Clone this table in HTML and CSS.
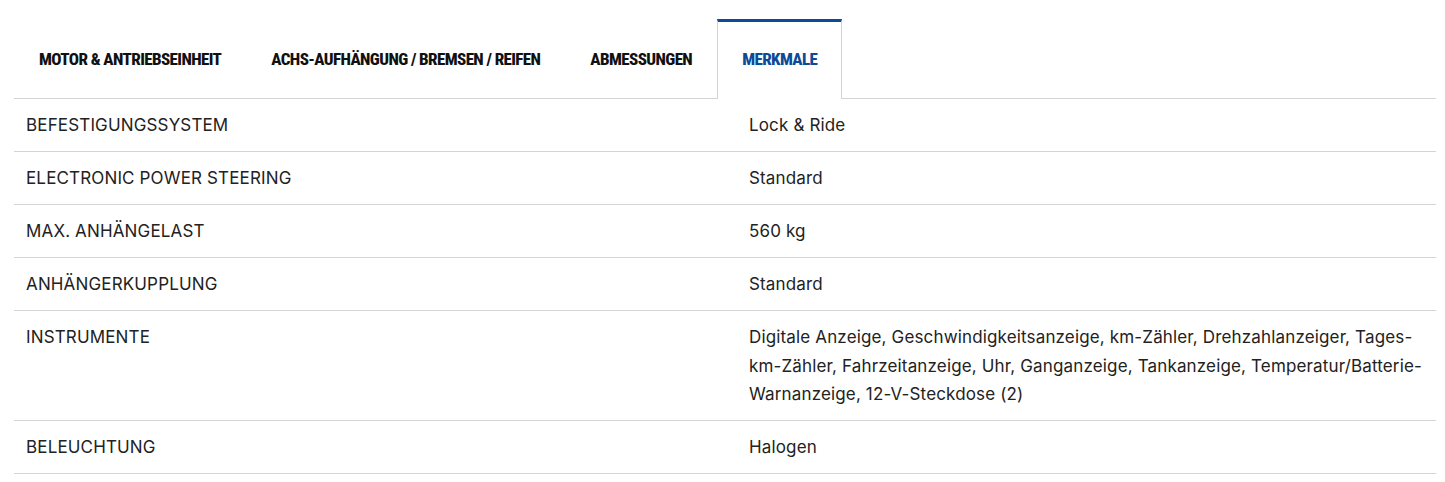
FILE: index.html
```html
<!DOCTYPE html>
<html lang="de">
<head>
<meta charset="utf-8">
<title>Technische Daten</title>
<link rel="stylesheet" href="styles.css">
</head>
<body>
<div class="specs">
  <nav class="tabs">
    <div class="tab">MOTOR &amp; ANTRIEBSEINHEIT</div>
    <div class="tab">ACHS-AUFHÄNGUNG / BREMSEN / REIFEN</div>
    <div class="tab">ABMESSUNGEN</div>
    <div class="tab active">MERKMALE</div>
  </nav>
  <div class="table">
    <div class="row"><div class="label">BEFESTIGUNGSSYSTEM</div><div class="value">Lock &amp; Ride</div></div>
    <div class="row"><div class="label">ELECTRONIC POWER STEERING</div><div class="value">Standard</div></div>
    <div class="row"><div class="label">MAX. ANHÄNGELAST</div><div class="value">560 kg</div></div>
    <div class="row"><div class="label">ANHÄNGERKUPPLUNG</div><div class="value">Standard</div></div>
    <div class="row"><div class="label">INSTRUMENTE</div><div class="value">Digitale Anzeige, Geschwindigkeitsanzeige, km-Zähler, Drehzahlanzeiger, Tages-<br>km-Zähler, Fahrzeitanzeige, Uhr, Ganganzeige, Tankanzeige, Temperatur/Batterie-<br>Warnanzeige, 12-V-Steckdose (2)</div></div>
    <div class="row"><div class="label">BELEUCHTUNG</div><div class="value">Halogen</div></div>
  </div>
</div>
</body>
</html>
```

FILE: styles.css
```css
html, body {
  margin: 0;
  padding: 0;
  background: #ffffff;
}
.specs {
  padding: 19px 9px 0 14px;
}
.tabs {
  display: flex;
  border-bottom: 1px solid #d4d4d4;
}
.tab {
  height: 76px;
  display: flex;
  align-items: center;
  padding: 0 24px 3px;
  box-sizing: content-box;
  border: 1px solid transparent;
  border-top: 3px solid transparent;
  border-bottom: none;
  margin-bottom: -1px;
  font-family: Roboto, "Liberation Sans", sans-serif;
  font-stretch: 75%;
  font-weight: 800;
  font-size: 17px;
  letter-spacing: -0.6px;
  color: #111111;
  white-space: nowrap;
}
.tab {
  height: 73px;
}
.tab.active {
  border-color: #d4d4d4;
  border-top-color: #0d4a97;
  background: #ffffff;
  height: 74px;
  color: #0d4a97;
}
.row {
  display: grid;
  grid-template-columns: 723px 1fr;
  border-bottom: 1px solid #d4d4d4;
  padding: 12px 0 11.5px 12px;
  font-family: Inter, "Liberation Sans", sans-serif;
  font-size: 17px;
  letter-spacing: 0.15px;
  line-height: 28.5px;
  color: #222222;
}
.label {
  padding-right: 12px;
}
.value {
  white-space: nowrap;
}
```
